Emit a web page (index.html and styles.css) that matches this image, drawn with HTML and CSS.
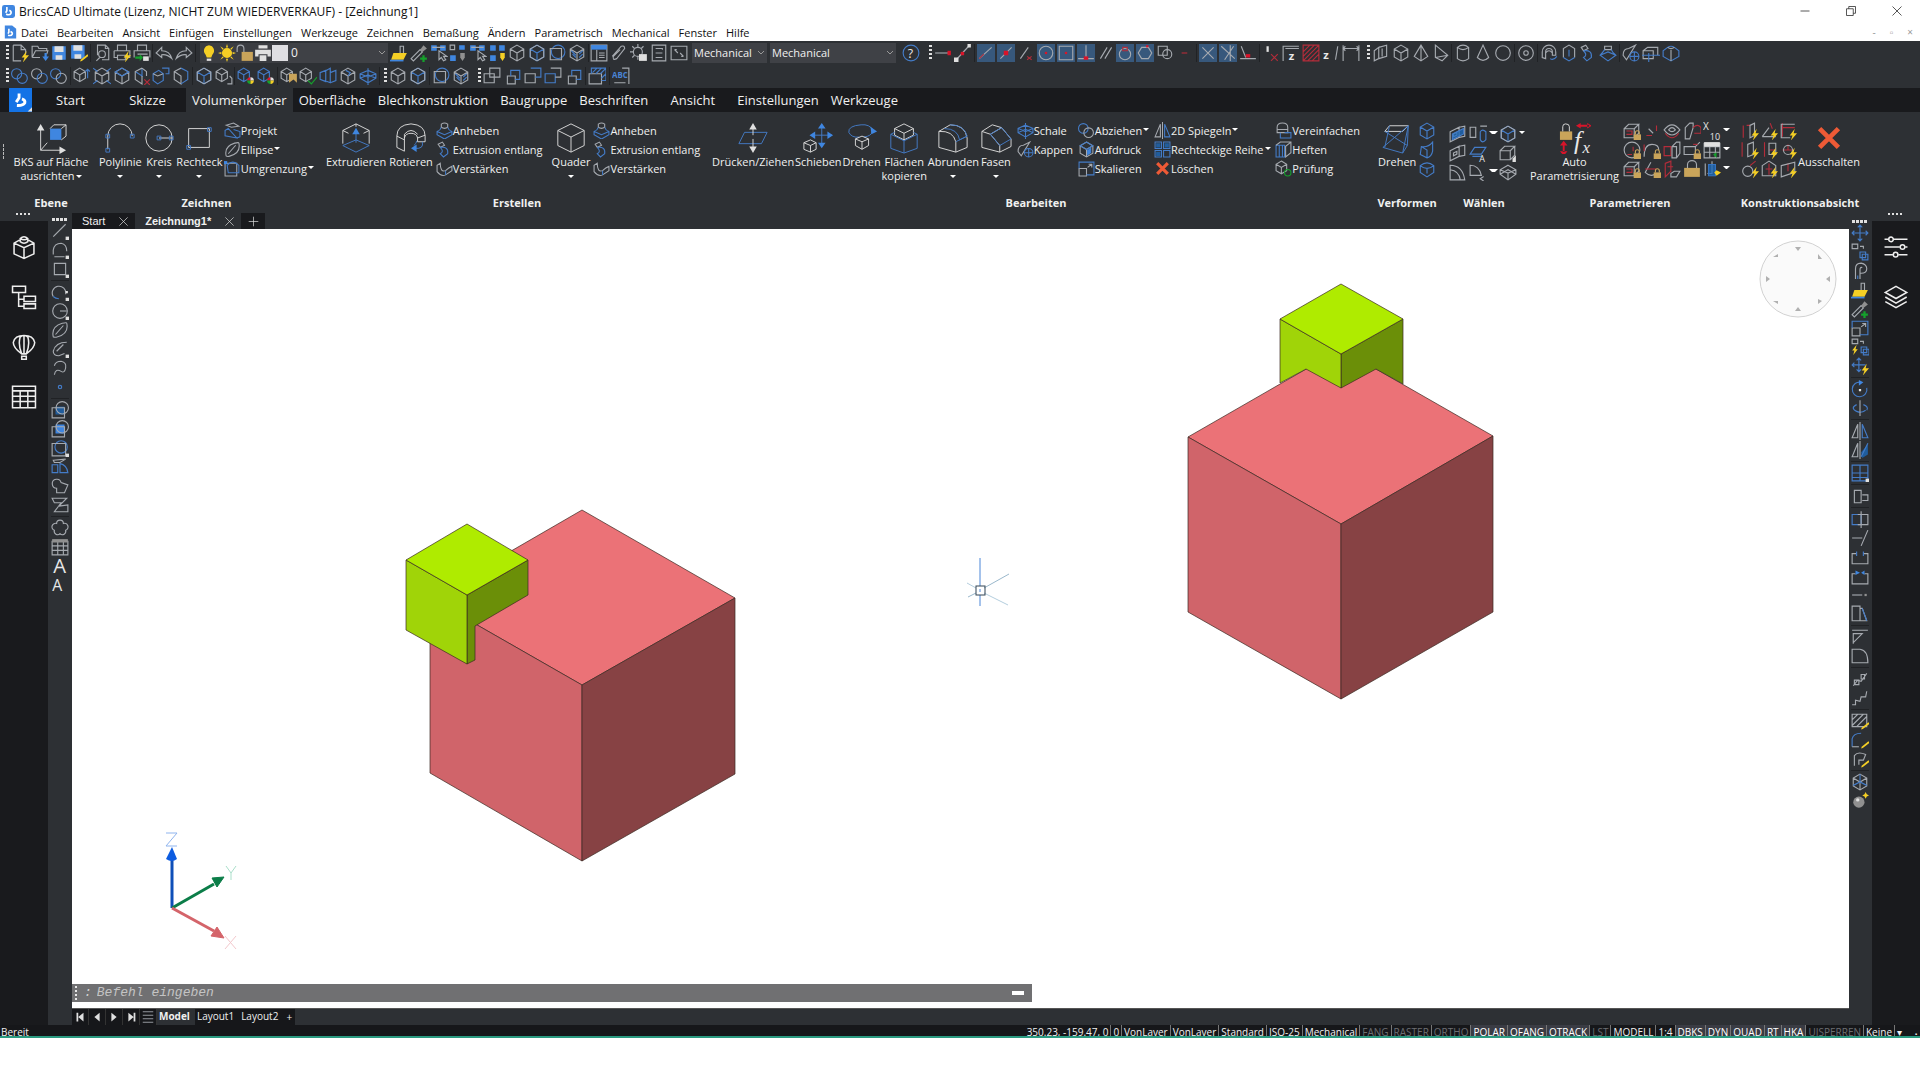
FILE: index.html
```html
<!DOCTYPE html>
<html lang="de">
<head>
    <meta charset="UTF-8">
    <meta name="viewport" content="width=device-width, initial-scale=1.0">
    <title>BricsCAD Ultimate - [Zeichnung1]</title>
    <link rel="stylesheet" href="styles.css">
</head>
<body>
    <header class="titlebar">
        <svg class="app-logo" data-icon="logo"></svg>
        <h1>BricsCAD Ultimate (Lizenz, NICHT ZUM WIEDERVERKAUF) - [Zeichnung1]</h1>
        <div class="window-buttons">
            <button aria-label="Minimieren"><svg data-icon="winMin"></svg></button>
            <button aria-label="Wiederherstellen"><svg data-icon="winRestore"></svg></button>
            <button aria-label="Schließen"><svg data-icon="winClose"></svg></button>
        </div>
    </header>

    <nav class="menubar">
        <svg class="doc-logo" data-icon="docLogo"></svg>
        <a href="#">Datei</a>
        <a href="#">Bearbeiten</a>
        <a href="#">Ansicht</a>
        <a href="#">Einfügen</a>
        <a href="#">Einstellungen</a>
        <a href="#">Werkzeuge</a>
        <a href="#">Zeichnen</a>
        <a href="#">Bemaßung</a>
        <a href="#">Ändern</a>
        <a href="#">Parametrisch</a>
        <a href="#">Mechanical</a>
        <a href="#">Fenster</a>
        <a href="#">Hilfe</a>
        <div class="mdi-buttons">
            <button aria-label="Dokument minimieren">-</button>
            <button aria-label="Dokument wiederherstellen">▫</button>
            <button aria-label="Dokument schließen">×</button>
        </div>
    </nav>

    <div class="toolbars">
        <div class="toolbar-row">
            <div class="toolbar t-standard" data-icons=":: new open save saveAs | preview print publish | undo redo |"></div>
            <div class="layer-box">
                <svg data-icon="bulb"></svg>
                <svg data-icon="sun"></svg>
                <svg data-icon="lockOpen"></svg>
                <svg data-icon="printer"></svg>
                <span class="swatch"></span>
                <select aria-label="Layer"><option>0</option></select>
            </div>
            <div class="toolbar t-layers" data-icons="brush picker selA selB selA selC"></div>
            <div class="toolbar t-views" data-icons="cubeW cubeB circSq cubeHatch | panel clip gear list arrows"></div>
            <select class="style-a" aria-label="Textstil"><option>Mechanical</option></select>
            <select class="style-b" aria-label="Bemaßungsstil"><option>Mechanical</option></select>
            <div class="toolbar t-help" data-icons="help"></div>
            <div class="toolbar t-snap" data-icons=":: track from | end! mid! near cen! geo! perp! par quad! node! ins ext | inter! appInt! perpR | noneR zed hatchR zedR dimR"></div>
            <div class="toolbar t-solids" data-icons=":: wall cubeP pyramid wedge | cyl cone sphere | torus | revolve extrudeS sweep loftB | slice section shell"></div>
        </div>
        <div class="toolbar-row">
            <div class="toolbar t-solid-edit" data-icons=":: uniB uniW uni | faceUp faceMove faceTop faceDel faceCopy faceRot | cubeB copyCube | colorCube colorCube | cubeTag cubeCheck cubesB cubeTop flatCube |"></div>
            <div class="toolbar t-vis" data-icons=":: cubeW cubeB | circSq cubeHatch"></div>
            <div class="toolbar t-order" data-icons=":: orderA orderD orderB orderC orderD | hatchTop | abc"></div>
        </div>
    </div>

    <nav class="ribbon-tabs">
        <button class="app-button" aria-label="Anwendungsmenü"><svg data-icon="mark"></svg></button>
        <a href="#">Start</a>
        <a href="#">Skizze</a>
        <a href="#" class="active">Volumenkörper</a>
        <a href="#">Oberfläche</a>
        <a href="#">Blechkonstruktion</a>
        <a href="#">Baugruppe</a>
        <a href="#">Beschriften</a>
        <a href="#">Ansicht</a>
        <a href="#">Einstellungen</a>
        <a href="#">Werkzeuge</a>
    </nav>

    <section class="ribbon">
        <div class="ribbon-grip"></div>
        <div class="group g-plane">
            <div class="tools">
                <button class="big"><svg data-big="ucs"></svg>BKS auf Fläche<span>ausrichten<i class="caret"></i></span></button>
            </div>
            <h2>Ebene</h2>
        </div>
        <div class="group g-draw">
            <div class="tools">
                <button class="big"><svg data-big="polyline"></svg>Polylinie<i class="caret"></i></button>
                <button class="big"><svg data-big="circle"></svg>Kreis<i class="caret"></i></button>
                <button class="big"><svg data-big="rect"></svg>Rechteck<i class="caret"></i></button>
                <div class="stack">
                    <button><svg data-icon="project"></svg>Projekt</button>
                    <button><svg data-icon="ellipse"></svg>Ellipse<i class="caret"></i></button>
                    <button><svg data-icon="boundary"></svg>Umgrenzung<i class="caret"></i></button>
                </div>
            </div>
            <h2>Zeichnen</h2>
        </div>
        <div class="group g-create">
            <div class="tools">
                <button class="big"><svg data-big="extrude"></svg>Extrudieren</button>
                <button class="big"><svg data-big="revolve"></svg>Rotieren</button>
                <div class="stack">
                    <button><svg data-icon="loft"></svg>Anheben</button>
                    <button><svg data-icon="sweep"></svg>Extrusion entlang</button>
                    <button><svg data-icon="thicken"></svg>Verstärken</button>
                </div>
                <button class="big"><svg data-big="box"></svg>Quader<i class="caret"></i></button>
                <div class="stack">
                    <button><svg data-icon="loft"></svg>Anheben</button>
                    <button><svg data-icon="sweep"></svg>Extrusion entlang</button>
                    <button><svg data-icon="thicken"></svg>Verstärken</button>
                </div>
            </div>
            <h2>Erstellen</h2>
        </div>
        <div class="group g-edit">
            <div class="tools">
                <button class="big"><svg data-big="pushpull"></svg>Drücken/Ziehen</button>
                <button class="big"><svg data-big="move"></svg>Schieben</button>
                <button class="big"><svg data-big="rotate"></svg>Drehen</button>
                <button class="big"><svg data-big="copyfaces"></svg>Flächen<span>kopieren</span></button>
                <button class="big"><svg data-big="fillet"></svg>Abrunden<i class="caret"></i></button>
                <button class="big"><svg data-big="chamfer"></svg>Fasen<i class="caret"></i></button>
                <div class="stack">
                    <button><svg data-icon="flatCube"></svg>Schale</button>
                    <button><svg data-icon="slice"></svg>Kappen</button>
                </div>
                <div class="stack">
                    <button><svg data-icon="uni"></svg>Abziehen<i class="caret"></i></button>
                    <button><svg data-icon="imprint"></svg>Aufdruck</button>
                    <button><svg data-icon="scale"></svg>Skalieren</button>
                </div>
                <div class="stack">
                    <button><svg data-icon="mirror"></svg>2D Spiegeln<i class="caret"></i></button>
                    <button><svg data-icon="array"></svg>Rechteckige Reihe<i class="caret"></i></button>
                    <button><svg data-icon="cross"></svg>Löschen</button>
                </div>
                <div class="stack">
                    <button><svg data-icon="simplify"></svg>Vereinfachen</button>
                    <button><svg data-icon="stitch"></svg>Heften</button>
                    <button><svg data-icon="audit"></svg>Prüfung</button>
                </div>
            </div>
            <h2>Bearbeiten</h2>
        </div>
        <div class="group g-deform">
            <div class="tools">
                <button class="big"><svg data-big="twist"></svg>Drehen</button>
                <div class="icon-grid one" data-icons="cubeBlue bend cubeRound"></div>
            </div>
            <h2>Verformen</h2>
        </div>
        <div class="group g-select">
            <div class="tools">
                <div class="icon-grid wide" data-icons="wallB selEdge v cubeB v wallW faceA . cubeArrow . arcA arcB v flatW ."></div>
            </div>
            <h2>Wählen</h2>
        </div>
        <div class="group g-param">
            <div class="tools">
                <button class="big"><svg data-big="autoparam"></svg>Auto<span>Parametrisierung</span></button>
                <div class="icon-grid six" data-icons="cubeLock pt torusR faceR xten v circLock arcLock boxR sqLock table v cubeLock coneLock wallR lock colsB v"></div>
            </div>
            <h2>Parametrieren</h2>
        </div>
        <div class="group g-intent">
            <div class="tools">
                <div class="icon-grid three" data-icons="boltA boltB boltC boltD boltE boltF boltG boltH boltI"></div>
                <button class="big"><svg data-big="cross"></svg>Ausschalten</button>
            </div>
            <h2>Konstruktionsabsicht</h2>
        </div>
    </section>

    <main class="workspace">
        <aside class="panel-strip">
            <i class="hgrip"></i>
            <div class="panel">
                <button aria-label="Komponenten"><svg data-big="pComp"></svg></button>
                <button aria-label="Struktur"><svg data-big="pTree"></svg></button>
                <button aria-label="Tipps"><svg data-big="pBalloon"></svg></button>
                <button aria-label="Tabelle"><svg data-big="pTable"></svg></button>
            </div>
        </aside>
        <div class="vtoolbar" data-icons=":: line pline square | arc circ ellipse ellArc spline point | hatchA hatchB hatchC wipe cloudA zigzag | cloud tableW bigA smallA"></div>

        <div class="document">
            <div class="doc-tabs">
                <a href="#">Start</a><button aria-label="Start schließen"><svg data-icon="x"></svg></button>
                <a href="#" class="active">Zeichnung1*</a><button class="active" aria-label="Zeichnung1 schließen"><svg data-icon="x"></svg></button>
                <button class="add" aria-label="Neue Zeichnung"><svg data-icon="plus"></svg></button>
            </div>
            <div class="canvas">
                <svg class="model" viewBox="72 229 1777 779" preserveAspectRatio="xMinYMin meet">
                    <!-- left pair -->
                    <g class="solid">
                        <polygon class="red-top" points="582,510 735,598 582,685 430,598"/>
                        <polygon class="red-left" points="430,598 582,685 582,861 430,773"/>
                        <polygon class="red-right" points="582,685 735,598 735,774 582,861"/>
                        <polygon class="green-right" points="467,595 528,560 528,595 475,626 475,660 467,664"/>
                        <polygon class="green-left" points="406,560 467,595 467,664 406,630"/>
                        <polygon class="green-top" points="467,524 528,560 467,595 406,560"/>
                    </g>
                    <!-- right pair -->
                    <g class="solid">
                        <polygon class="red-top" points="1341,349 1493,436 1341,524 1188,437"/>
                        <polygon class="red-left" points="1188,437 1341,524 1341,699 1188,612"/>
                        <polygon class="red-right" points="1341,524 1493,436 1493,612 1341,699"/>
                        <polygon class="green-right" points="1341,354 1403,319 1403,384 1376,369 1341,388"/>
                        <polygon class="green-left" points="1280,319 1341,354 1341,388 1306,369 1280,383"/>
                        <polygon class="green-top" points="1341,284 1403,319 1341,354 1280,319"/>
                    </g>
                    <!-- crosshair -->
                    <g class="cursor">
                        <path class="cz" d="M980 558V586M980 595V606"/>
                        <path class="cy" d="M984 588 1009 574M976 593 968 597"/>
                        <path class="cx" d="M984 593 1008 605M976 588 967 583"/>
                        <rect x="976" y="586" width="9" height="9"/>
                        <path class="cz" d="M980 589V592"/>
                    </g>
                    <!-- coordinate axes -->
                    <g class="axes">
                        <path d="M172 908V855" stroke="#0f4fb8" stroke-width="3"/>
                        <path d="M172 847 177 859Q172 863 166 859Z" fill="#0d5ce0"/>
                        <path d="M172 908 214 884" stroke="#0b7d48" stroke-width="3"/>
                        <path d="M224 877 217 887 212 878Z" fill="#0b7d48" stroke="#0b7d48"/>
                        <path d="M172 908 214 931" stroke="#d4646a" stroke-width="3"/>
                        <path d="M224 938 211 936 217 927Z" fill="#d4646a" stroke="#d4646a"/>
                        <path d="M166 833H177L166 846H177" stroke="#8fb4ee"/>
                        <path d="M226 866 231 873 236 866M231 873V880" stroke="#aadfca"/>
                        <path d="M225 936 236 949M236 936 225 949" stroke="#f3c8cc"/>
                    </g>
                    <!-- view compass -->
                    <g class="compass">
                        <circle cx="1798" cy="279" r="38"/>
                        <path d="M1795 247h6l-3 4ZM1795 311h6l-3-4ZM1766 276v6l4-3ZM1830 276v6l-4-3ZM1773 257h5v-3ZM1818 254v5h4ZM1773 301h5v3ZM1818 299v5l4-3Z"/>
                    </g>
                </svg>
                <div class="command">
                    <i class="dots"></i>
                    <label for="cmd">:</label>
                    <input id="cmd" type="text" placeholder="Befehl eingeben">
                    <button aria-label="Befehlszeile minimieren"></button>
                </div>
            </div>
            <div class="layouts">
                <button aria-label="Erstes Layout"><svg data-icon="first"></svg></button>
                <button aria-label="Vorheriges Layout"><svg data-icon="prev"></svg></button>
                <button aria-label="Nächstes Layout"><svg data-icon="next"></svg></button>
                <button aria-label="Letztes Layout"><svg data-icon="last"></svg></button>
                <button aria-label="Layoutliste"><svg data-icon="rows"></svg></button>
                <a href="#" class="active">Model</a>
                <a href="#">Layout1</a>
                <a href="#">Layout2</a>
                <button class="add">+</button>
            </div>
        </div>

        <div class="vtoolbar right" data-icons=":: moveB copyB offset brush picker scale copyBolt moveBolt | rotB rot3 | mirror mirror3 | arrayB | align | stretch trim breakA breakB join chamferB | filletA filletB | edA edB | hatchP pP sP | cubeEd ball"></div>
        <aside class="panel-strip">
            <i class="hgrip"></i>
            <div class="panel">
                <button aria-label="Eigenschaften"><svg data-big="pSliders"></svg></button>
                <button aria-label="Layer"><svg data-big="pLayers"></svg></button>
            </div>
        </aside>
    </main>

    <footer class="statusbar">
        <span class="ready">Bereit</span>
        <span class="coords">350.23, -159.47, 0</span>
        <span>0</span>
        <span>VonLayer</span>
        <span>VonLayer</span>
        <span>Standard</span>
        <span>ISO-25</span>
        <span>Mechanical</span>
        <button>FANG</button>
        <button>RASTER</button>
        <button>ORTHO</button>
        <button class="on">POLAR</button>
        <button class="on">OFANG</button>
        <button class="on">OTRACK</button>
        <button>LST</button>
        <span>MODELL</span>
        <span>1:4</span>
        <button class="on">DBKS</button>
        <button class="on">DYN</button>
        <button class="on">QUAD</button>
        <button class="on">RT</button>
        <button class="on">HKA</button>
        <button>UISPERREN</button>
        <span>Keine</span>
        <span class="more">▾</span>
        <span class="resize">⣠</span>
    </footer>

    <script src="icons.js"></script>
</body>
</html>
```

FILE: styles.css
```css
* {
    box-sizing: border-box;
}
body {
    margin: 0;
    min-height: 100vh;
    padding-bottom: 42px;
    display: flex;
    flex-direction: column;
    font-family: "Open Sans", "Noto Sans", sans-serif;
    font-size: 12px;
    background: #fff;
    color: #f0f0f0;
}
button, select, input {
    font: inherit;
    color: inherit;
    background: none;
    border: 0;
    padding: 0;
    margin: 0;
}
button {
    display: flex;
    align-items: center;
    justify-content: center;
}
a {
    color: inherit;
    text-decoration: none;
}
h1, h2 {
    margin: 0;
}

/* icons */
svg {
    display: block;
    flex: none;
    width: 18px;
    height: 18px;
    fill: none;
    stroke: #a6aab0;
    stroke-width: 1;
}
svg .b { stroke: #447cc8; }
svg .r { stroke: #b42c3a; }
svg .g { stroke: #15a02c; }
svg .o { stroke: #ee5a36; stroke-width: 3; }
svg .k { stroke: #222; }
svg .mk { stroke: #fff; stroke-width: 2; }
svg .fw { fill: #e0e0e0; stroke: none; }
svg .fb { fill: #3f86e0; stroke: none; }
svg .fd { fill: #1c6cc0; stroke: none; opacity: .75; }
svg .fy { fill: #f5cf25; stroke: none; }
svg .ft { fill: #c9a45a; stroke: none; }
svg .fr { fill: #d8142a; stroke: none; }
svg .fg { fill: #15a02c; stroke: none; }
svg .fs { fill: #909090; stroke: none; }
svg text {
    fill: #e8e8e8;
    stroke: none;
}

/* title and menu */
.titlebar {
    display: flex;
    align-items: center;
    height: 22px;
    padding-left: 2px;
    color: #111;
}
.titlebar h1 {
    margin-left: 4px;
    font-size: 12px;
    font-weight: 400;
}
.app-logo {
    width: 13px;
    height: 13px;
}
.window-buttons {
    display: flex;
    margin-left: auto;
}
.window-buttons button {
    width: 46px;
    height: 20px;
}
.window-buttons svg {
    width: 12px;
    height: 12px;
}
.menubar {
    display: flex;
    align-items: center;
    gap: 9px;
    height: 19px;
    padding: 1px 0 0 4px;
    font-size: 11px;
    color: #111;
}
.doc-logo {
    width: 13px;
    height: 16px;
    margin-right: -5px;
}
.mdi-buttons {
    display: flex;
    gap: 14px;
    margin-left: auto;
    margin-right: 7px;
    color: #999;
    font-size: 10px;
}

/* toolbars */
.toolbars {
    background: #2d3034;
    padding-bottom: 1px;
}
.toolbar-row {
    display: flex;
    align-items: center;
    height: 23px;
    padding-left: 6px;
}
.toolbar {
    display: flex;
    align-items: center;
    justify-content: space-between;
}
.toolbar button,
.vtoolbar button {
    width: 18px;
    height: 18px;
}
.toolbar button.on {
    background: #37587c;
}
.sep {
    width: 1px;
    height: 18px;
    background: #202225;
}
.grip {
    width: 3px;
    height: 16px;
    background: repeating-linear-gradient(#e0e0e0 0 2px, transparent 2px 4px);
}
.t-standard { width: 190px; margin-right: 4px; }
.t-layers { width: 117px; margin: 0 1px 0 2px; }
.t-views { width: 180px; margin-right: 4px; }
.t-help { width: 18px; margin: 0 9px 0 6px; }
.t-snap { width: 431px; margin-right: 7px; }
.t-solids { width: 313px; }
.t-solid-edit { width: 374px; margin-right: 4px; }
.t-vis { width: 86px; margin-right: 8px; }
.t-order { width: 152px; }
.layer-box {
    display: flex;
    align-items: center;
    width: 188px;
    height: 20px;
    background: #3b3d42;
}
.layer-box .swatch {
    width: 16px;
    height: 16px;
    background: #dedee2;
}
.layer-box select {
    flex: 1;
    padding-left: 3px;
}
select {
    height: 20px;
    padding-left: 2px;
    appearance: none;
    background: url("data:image/svg+xml,%3Csvg xmlns='http://www.w3.org/2000/svg' width='8' height='6'%3E%3Cpath d='M1 1 4 4 7 1' fill='none' stroke='%23999'/%3E%3C/svg%3E") no-repeat right 2px center #3f4146;
}
.style-a { width: 75px; margin-right: 3px; font-size: 11px; }
.style-b { width: 126px; font-size: 11px; }

/* ribbon */
.ribbon-tabs {
    display: flex;
    height: 24px;
    padding-left: 9px;
    background: #191a1d;
    font-size: 13px;
    line-height: 24px;
}
.ribbon-tabs a {
    min-width: 77px;
    padding: 0 6px;
    text-align: center;
}
.ribbon-tabs a.active {
    background: #2d3034;
}
.app-button {
    width: 23px;
    background: #1473e6;
}
.app-button svg {
    width: 23px;
    height: 24px;
}
.ribbon {
    display: flex;
    gap: 4px;
    height: 101px;
    padding: 9px 0 2px;
    background: #2d3034;
    font-size: 11px;
}
.ribbon-grip {
    width: 4px;
    height: 15px;
    margin-top: 23px;
    border-right: 1px dashed #bbb;
}
.group {
    display: flex;
    flex-direction: column;
    justify-content: space-between;
}
.group h2 {
    align-self: center;
    font-size: 11px;
    line-height: 16px;
    white-space: nowrap;
}
.tools {
    display: flex;
    justify-content: space-between;
    white-space: nowrap;
}
.big {
    flex-direction: column;
    justify-content: flex-start;
    line-height: 14px;
}
.big svg {
    width: 32px;
    height: 32px;
    margin: 1px 0;
    stroke: #dcdcdc;
}
.big > .caret {
    margin: 6px 0 0;
}
.caret {
    display: inline-block;
    flex: none;
    margin: 0 0 2px 1px;
    border: 3px solid transparent;
    border-top-color: #fff;
    border-bottom: 0;
}
.stack button {
    height: 19px;
}
.stack svg {
    width: 17px;
    height: 17px;
}
.g-plane { width: 86px; }
.g-plane .tools { justify-content: center; }
.g-draw { width: 216px; padding-left: 1px; }
.g-create { width: 390px; padding-left: 8px; }
.g-create .tools { justify-content: flex-start; gap: 3px; }
.g-create .stack { margin-right: 6px; }
.g-edit { width: 654px; padding-right: 6px; }
.g-edit .stack { margin-left: 4px; }
.g-deform { width: 74px; padding: 0 8px; }
.g-select { width: 72px; }
.g-param { width: 212px; padding: 0 6px; }
.g-intent { width: 120px; }
.icon-grid {
    display: grid;
    align-content: start;
    grid-auto-rows: 19px;
    align-items: center;
}
.icon-grid.one { grid-template-columns: 18px; }
.icon-grid.three { grid-template-columns: repeat(3, 19px); }
.icon-grid.six { grid-template-columns: repeat(5, 20px) 8px; }
.icon-grid.wide {
    grid-template-columns: 20px 20px 10px 20px 6px;
    padding-top: 3px;
}

/* workspace */
.workspace {
    display: flex;
    flex: 1;
    background: #2d3034;
}
.panel-strip {
    display: flex;
    flex-direction: column;
    align-items: center;
    width: 48px;
}
.hgrip {
    width: 16px;
    height: 2px;
    margin-bottom: 6px;
    background: repeating-linear-gradient(90deg, #e0e0e0 0 2px, transparent 2px 4px);
}
.panel {
    display: flex;
    flex-direction: column;
    align-items: center;
    flex: 1;
    align-self: stretch;
    gap: 24px;
    padding-top: 13px;
    background: #191a1d;
}
.panel svg {
    width: 26px;
    height: 26px;
    stroke: #eee;
    stroke-width: 2;
}
.vtoolbar {
    display: flex;
    flex-direction: column;
    align-items: center;
    gap: 1px;
    width: 24px;
    padding-top: 5px;
}
.vtoolbar .grip {
    width: 16px;
    height: 3px;
    background: repeating-linear-gradient(90deg, #e0e0e0 0 3px, transparent 3px 4px);
}
.vtoolbar .sep {
    width: 18px;
    height: 1px;
    margin: 1px 0;
}
.vtoolbar.right {
    width: 23px;
    padding: 7px 2px 0 0;
}
.document {
    display: flex;
    flex: 1;
    flex-direction: column;
    min-width: 0;
}
.doc-tabs {
    display: flex;
    height: 16px;
    font: 11px/16px "Liberation Sans", sans-serif;
}
.doc-tabs a,
.doc-tabs button {
    background: #191a1d;
}
.doc-tabs a {
    padding: 0 6px 0 10px;
}
.doc-tabs button {
    width: 24px;
}
.doc-tabs .active {
    background: #2d3034;
    font-weight: 700;
}
.doc-tabs svg {
    width: 11px;
    height: 11px;
    stroke: #ddd;
}
.canvas {
    position: relative;
    flex: 1;
    background: #fff;
}
.model {
    width: 100%;
    height: auto;
}
.model .solid {
    stroke: #3a2a22;
    stroke-opacity: .7;
    stroke-linejoin: round;
}
.red-top { fill: #eb7277; }
.red-left { fill: #d0646a; }
.red-right { fill: #874244; }
.green-top { fill: #afeb00; }
.green-left { fill: #a0d408; }
.green-right { fill: #6b8f08; }
.cursor .cz { stroke: #4b86d8; }
.cursor .cx { stroke: #b4cede; }
.cursor .cy { stroke: #9ab8cc; }
.cursor rect { stroke: #345; }
.axes { stroke: none; }
.compass circle { fill: #fafafa; stroke: #d2d2d2; stroke-width: 1; }
.compass path { fill: #b0b0b0; stroke: none; }

/* floats over the drawing */
.command {
    position: absolute;
    left: 0;
    bottom: 6px;
    display: flex;
    align-items: center;
    width: 54%;
    height: 18px;
    background: #707072;
    font: italic 13px/16px "Liberation Mono", monospace;
    color: #d0d0d0;
}
.command .dots {
    width: 2px;
    height: 15px;
    margin: 0 7px 0 3px;
    background: repeating-linear-gradient(#e8e8e8 0 2px, transparent 2px 4px);
}
.command input {
    flex: 1;
    margin-left: 5px;
}
.command input::placeholder {
    color: #c4c4c4;
}
.command button {
    width: 12px;
    height: 4px;
    margin-right: 8px;
    background: #fff;
}
.layouts {
    display: flex;
    height: 17px;
    border-top: 1px solid #555;
    font-size: 10px;
    line-height: 15px;
}
.layouts button,
.layouts a {
    background: #16171a;
}
.layouts button {
    width: 17px;
    border-right: 1px solid #333;
}
.layouts svg {
    width: 14px;
    height: 14px;
}
.layouts a {
    padding: 0 5px 0 2px;
}
.layouts .active {
    background: #2d3034;
    font-weight: 700;
}
.layouts .add {
    width: 12px;
    border: 0;
}

/* status */
.statusbar {
    display: flex;
    height: 13px;
    overflow: hidden;
    border-bottom: 2px solid #2a9a80;
    background: #16171a;
    font-size: 10px;
    line-height: 14px;
}
.statusbar span,
.statusbar button {
    height: 14px;
    padding: 0 2px;
    border-right: 1px solid #777;
    white-space: nowrap;
}
.statusbar button {
    color: #6c6e72;
}
.statusbar button.on {
    background: #3a3c44;
    color: #fff;
}
.statusbar .ready {
    margin-right: auto;
    padding-left: 1px;
    border: 0;
}
.statusbar .more {
    width: 14px;
    border: 0;
}
.statusbar .resize {
    border: 0;
}
```

FILE: icons.js
```js
// Every icon is a list of "class:path" parts separated by ";".
// Small icons use a 16px grid, big ones a 32px grid.
const circle = (x, y, r) => `M${x - r} ${y}a${r} ${r} 0 1 0 ${2 * r} 0a${r} ${r} 0 1 0 ${-2 * r} 0`;
const CUBE = "M8 1 14 4.5V11.5L8 15 2 11.5V4.5ZM2 4.5 8 8 14 4.5M8 8V15";
const HALF = "M6 1 11 4V10L6 13 1 10V4ZM1 4 6 7 11 4M6 7V13";
const BOX = "M1 6H10V14H1ZM1 6 5 2H14L10 6M14 2V10L10 14";
const WALL = "M1 6 9 2V11L1 15ZM9 2 14 1V10L9 11M4 8 7 6.500V9L4 10.500Z";
const LOCK = ";ft:M9.500 11H16V16H9.500Z;ft:M10.500 11V9.500a2.200 2.200 0 0 1 4.500 0V11H14V9.500a1.200 1.200 0 0 0-2.500 0V11Z";
const BOLT = ";fy:M14 6 9.500 12H12L10.500 16.500 16 10H13Z";
const PEN = ";fy:M15.500 9 16.500 10.500 10.500 15 9 15.500 9.500 14Z";
const RGB = ";fr:M9 12a3 3 0 0 1 3-3V12Z;fg:M9 12a3 3 0 0 0 3 3V12Z;fw:M12 9a3 3 0 0 1 3 3H12Z;fy:M12 15a3 3 0 0 0 3-3H12Z";
const SHEETS = "M6 1H15V9H6ZM1 6H10V14H1Z";

const ICONS = {
    logo: "fb:M3 0H13Q16 0 16 3V13Q16 16 13 16H3Q0 16 0 13V3Q0 0 3 0Z;mk:M6 2.500V7L4.500 9.500M9 6.500Q12 8 11 10.500 9.500 13 5 11.500",
    docLogo: "fb:M1 0H10L15 4V16H1Z;mk:M6 4V8L5 10M8 7.500Q11 9 10 11 9 13 5 12",
    mark: "mk:M7 3.500V6.500L5 9.500M9 7.200Q11.500 8 11 10 10 12 5.500 11.800;fw:M16 13V16H13Z",
    winMin: "k:M2 8H14", winRestore: "k:M2 5H11V14H2ZM5 5V2H14V11H11", winClose: "k:M2 2 14 14M14 2 2 14",
    x: "w:M2 2 14 14M14 2 2 14", plus: "w:M8 1V15M1 8H15",
    first: "fw:M4 3H6V13H4ZM12 3V13L6 8Z", prev: "fw:M11 3V13L5 8Z", next: "fw:M5 3V13L11 8Z", last: "fw:M11 3H13V13H11ZM5 3V13L11 8Z",
    rows: "w:M2 2H14M2 6H14M2 10H14M2 14H14",
    new: "w:M2 1H9L13 5V9M2 1V15H9M9 1V5H13" + BOLT,
    open: "w:M1 12V2H6L7 4H14V6M1 12 4 6H15L14 9M1 12H8;fb:M12 8V11H10L13 15 16 11H14V8Z",
    save: "fb:M2 2H14V14H2Z;fw:M4 2H12V7H4ZM5 10H11V14H5Z",
    saveAs: "fb:M1 1H13V13H1Z;fw:M3 1H11V6H3ZM4 9H10V13H4Z" + PEN,
    preview: "w:M4 10V1H11L14 4V14H8M11 1V4H14M3 15 6 12;w:" + circle(8, 9, 3),
    print: "w:M4 6V1H12V6M1 6H15V12H12M1 6V12H4M4 10H11V14H4Z" + BOLT,
    publish: "w:M4 6V1H12V6M1 12V6H15V12M4 9H13;fw:M9 11H14V15H9Z;fg:M2 11H6V9L9 12 6 15V13H2Z",
    undo: "w:M6 3 1 8 6 12V9.500Q11 9 15 13 13 6 6 6Z",
    redo: "w:M10 3 15 8 10 12V9.500Q5 9 1 13 3 6 10 6Z",
    bulb: "fy:M8 1a5 5 0 0 1 3 8.500L10 12H6L5 9.500A5 5 0 0 1 8 1Z;fw:M6 13H10V15H6Z",
    sun: "fy:" + circle(8, 8, 4.500) + ";fy:M8 0 9 3H7ZM8 16 9 13H7ZM0 8 3 7V9ZM16 8 13 7V9ZM2 2 5 4 4 5ZM14 2 11 4 12 5ZM2 14 4 11 5 12ZM14 14 12 11 11 12Z",
    lockOpen: "ft:M5 7H15V15H5Z;w:M7 7V4a3 3 0 0 0-6 0V7",
    lock: "ft:M1 7H15V15H1Z;w:M4 7V4a4 3.500 0 0 1 8 0V7",
    printer: "fw:M4 1H12V4H4ZM1 5H15V11H12V9H4V11H1ZM5 10H11V15H5Z",
    brush: "fy:M3 8H15L12 14H1Z;fb:M0 14H12V15.500H0Z;w:M9 8V2H12V8",
    picker: "w:M1 13 9 5 11 7 3 15Z;fs:M9 5 12 1 15 4 11 7Z;fg:M11 10H13V12H15V14H13V16H11V14H9V12H11Z",
    selA: "fb:M1 1H6V6H1ZM9 1H14V6H9Z;w:M2 3H13M8 6V14L10 12 12 15 14 14 12 11H15Z",
    selB: "w:M1 1H5V5H1Z;fb:M9 1H14V5H9ZM1 10H6V15H1Z;fs:M10 8H14V12L12 15 10 12Z",
    selC: "fb:M1 1H6V6H1ZM9 1H14V6H9ZM1 10H6V15H1Z;fy:M10 8H14V12L12 15 10 12Z",
    cubeW: "w:" + CUBE, cubeP: "w:" + CUBE, cubeB: "b:" + CUBE + ";w:M8 1 14 4.5V11.5L8 15M8 1 2 4.500V11.500L8 15", cubeBlue: "b:" + CUBE,
    cubeRound: "b:M2 5V11L8 15 14 11V5Q8 0 2 5ZM2 5Q8 10 14 5M8 8V12",
    circSq: "b:" + circle(9, 7, 6) + ";w:M2 4H12V14H2Z",
    cubeHatch: "w:" + CUBE + ";b:M4 9 7 12M3 6 7 10M10 9 13 6M10 12 13 9",
    panel: "w:M1 1H15V15H1ZM6 5V15M8 8H13M8 10H13M8 12H13;fb:M1 1H15V5H1Z",
    clip: "w:M2 11 10 2Q13 1 13 4L6 13Q2 15 3 11L9 5",
    gear: "w:" + circle(7, 7, 4) + ";w:M7 0V3M7 11V14M0 7H3M2 2 4 4M12 2 10 4M2 12 4 10;fw:M8 9H15V15H8Z",
    list: "w:M2 1H14V15H2ZM5 4H11V5M5 8H11M5 12H11",
    arrows: "w:M1 2H15V14H1ZM4 5 7 8M4 5H6M12 11 9 8M12 11H10",
    help: "<path class='b' d='" + circle(8, 8, 7) + "'/><text x='5' y='12' font-size='11'>?</text>",
    track: "w:M1 8H14;fr:M12 6H15V10H12Z", from: "w:M2 14 13 2;fr:M6 7H9V10H6Z;fw:M0 12H4V16H0ZM12 0H15V3H12Z",
    end: "w:M2 13 13 3;r:M2 13 6 9", mid: "w:M3 13 13 3;fr:M6 6H10V10H6Z", near: "w:M3 13 10 3;r:M9 11 13 14M13 11 9 14",
    cen: "w:" + circle(8, 8, 6) + ";fr:M7 7H9V9H7Z", geo: "w:M2 2H14V14H2Z;fr:M7 7H9V9H7Z", perp: "w:M8 1V13M1 13H15;fr:M6 11H10V14H6Z",
    par: "w:M3 13 9 3M7 13 13 3", quad: "w:" + circle(8, 9, 5) + ";r:M6 3H10V6H6Z", node: "w:M5 3H11L14 8 11 13H5L2 8Z;fr:M9 1H11V3H9Z",
    ins: "w:M2 2H10V10H2Z;w:" + circle(10, 9, 4), ext: "r:M5 8H10", inter: "w:M3 3 13 13M13 3 3 13", appInt: "w:M2 2 14 13M13 2 5 14M10 1V15",
    perpR: "w:M2 2 6 12M1 13H15;fr:M6 9H10V12H6Z", noneR: "r:M8 9 14 15M14 9 8 15;fw:M4 2H6V7H4Z",
    zed: "<path class='w' d='M1 15V2H15M3 4H15'/><text x='6' y='14' font-size='10' font-weight='700'>z</text>",
    zedR: "<path class='w' d='M14 2 12 14'/><text x='1' y='13' font-size='10' font-weight='700'>z</text>",
    hatchR: "r:M1 1H15V15H1ZM1 7 7 1M1 11 11 1M1 15 15 1M5 15 15 5M9 15 15 9", dimR: "w:M1 1V15M15 1V15M1 4H15M3 2 1 4 3 6M13 2 15 4 13 6",
    wall: "w:M2 6 6 3V13L2 15ZM6 3 13 1V11L6 13M9 4V11", pyramid: "w:M8 1 2 11 8 15 14 11ZM8 1V15", wedge: "w:M3 1V12L9 15 14 10ZM3 12 14 10",
    cyl: "w:M3 3V13Q8 17 13 13V3Q8-1 3 3Q8 7 13 3", cone: "w:M8 1 3 12Q8 17 13 12Z", sphere: "w:" + circle(8, 8, 6.500),
    torus: "w:" + circle(8, 8, 6.500) + ";w:" + circle(8, 8, 2), torusR: "w:M1 7Q8-2 15 7 8 16 1 7ZM5 7Q8 3 11 7 8 10 5 7Z;r:M2 10Q8 18 14 10",
    revolve: "w:M2 12V7a6 6 0 0 1 12 0V10H11V7a3 3 0 0 0-6 0V13ZM5 8Q8 4 11 8;b:M15 11Q12 15 9 13", extrudeS: "w:M3 12V4L8 1 13 4V12;b:M3 12 8 15 13 12M8 5V11",
    sweep: "w:M2 3 6 1 8 4 4 6Z;b:M4 6Q12 5 11 12L7 15 4 12Q8 10 4 6", loftB: "w:M5 2H11V5H5Z;b:M5 5Q3 8 1 10L8 15 15 10Q12 8 11 5M1 10 8 7 15 10",
    loft: "w:M5 2Q8 0 11 2V5Q8 7 5 5Z;b:M5 5Q4 8 1 9V12L8 16 15 12V9Q12 8 11 5M1 9 8 12 15 9",
    thicken: "w:M1 5V11Q5 16 9 14L15 10V6Q12 7 9 10 4 12 4 3Z;b:M9 10V14",
    slice: "w:M1 10Q1 4 6 4L12 1 4 14Z;b:" + circle(11, 11, 4) + ";b:M7 11H15M11 7V15",
    section: "w:M1 6 5 3H14V10M1 6H10V13H1Z;b:M0 10H16M6 8V16", shell: "b:M5 3Q8 1 11 3L15 6V11L8 15 1 11V6Z;w:M5 3Q8 5 11 3M8 5V15",
    uniB: "b:" + circle(5, 6, 4.500) + ";b:" + circle(10, 10, 4.500), uniW: "w:" + circle(5, 6, 4.500) + ";b:" + circle(10, 10, 4.500),
    uni: "b:" + circle(5, 6, 4.500) + ";w:" + circle(10, 10, 4.500),
    faceUp: "w:" + HALF + ";b:M13 10V2M11 4 13 2 15 4", faceMove: "w:" + CUBE + ";b:M0 1 4 4M16 1 12 4M0 15 4 12M16 15 12 12",
    faceTop: "w:" + CUBE + ";b:M2 4.500 8 1 14 4.500 8 8Z", faceDel: "b:M8 1V8L2 4;w:M8 1 2 4V11L8 15V8M8 1 12 4V8;r:M10 11 15 16M15 11 10 16",
    faceCopy: "b:M1 6 6 3 10 6V12L5 15 1 12ZM9 1H15V6H12;w:M1 6 5 8 10 6", faceRot: "w:M8 1 2 4V11L8 15V8L2 4;b:M8 1 14 4V11L8 15",
    copyCube: "w:" + HALF + ";w:M13 8 15 10V15H11", colorCube: "b:" + HALF + RGB, cubeTag: "w:" + HALF + ";ft:M8 6H15V14L12 11 8 14Z",
    cubeCheck: "w:" + HALF + ";g:M8 12 11 15 16 9", cubesB: "b:M1 5 6 3V13L1 11ZM5 4 10 1V14L5 12M10 5 15 3V12L10 14",
    cubeTop: "w:" + CUBE + ";b:M6 3 10 5 8 8", flatCube: "b:M8 3 15 6V10L8 14 1 10V6ZM1 6 8 9 15 6M8 1V16M1 10 8 7 15 10",
    flatW: "w:M8 2 15 6V10L8 15 1 10V6ZM1 6 8 9 15 6M8 9V15M1 10 8 6 15 10",
    orderA: "w:" + SHEETS, orderB: "w:M1 6H10V14H1Z;b:M6 1H15V9H10", orderC: "b:M1 6H10V14H1Z;w:M6 1H15V9H10", orderD: "w:M3 8H10V15H3Z;b:M6 8V3H14V11H10",
    hatchTop: "w:M1 6H12V15H1Z;b:M3 6V1H16V12H12M4 5 8 1M7 6 12 1M11 6 16 1M12 10 16 6",
    abc: "<path class='w' d='M9 1H15V15M2 14H12'/><text x='0' y='10' font-size='7' font-weight='700' style='fill:#4a84d4'>ABC</text>",
    project: "w:M2 3 9 1 14 4 7 5Z;b:M1 8 4 6 12 15 1 13ZM9 7 15 9V14L12 15",
    ellipse: "w:M2 14Q0 5 10 2 14 1 14 2 16 11 6 14 3 15 2 14ZM4 12 11 4", boundary: "w:M1 3H12V15H1Z;b:M3 5Q8-1 14 5V12H4Z;fb:M0 1H3V4H0Z",
    imprint: "w:" + CUBE + ";b:M2 4.500 8 1 14 4.500 8 8ZM9 9 12 7V11L9 13Z;fb:M9 9 12 7V11L9 13Z", scale: "w:M1 8H8V15H1Z;b:M1 8V2H15V14H8;w:M9 7 13 4M10 4H13V7",
    mirror: "w:M6 2V14H1Z;b:M10 2V14H15Z;w:M8 0V16", mirror3: "w:M6 2V14H1ZM8 0V16;fd:M9 10 15 3V12L10 15Z;b:M9 14 15 2",
    array: "b:M1 1H7V7H1ZM9 1H15V7H9ZM1 9H7V15H1ZM9 9H15V15H9Z;fd:M2 2H6V6H2ZM10 2H14V6H10ZM2 10H6V14H2Z", arrayB: "b:M1 1H15V15H1ZM8 1V15M1 8H15M1 12H15;fw:M13 13H16V16H13Z",
    cross: "o:M3 3 13 13M13 3 3 13", simplify: "w:M2 10V5Q2 1 7 1 12 1 12 5V10ZM2 7H12;b:M9 10H15V15H5V10", stitch: "b:M1 4H9V15H1ZM4 4V15M7 4V15;w:M1 4 5 1H15V11L10 15V5L15 1",
    audit: "w:" + HALF + ";g:" + circle(12, 12, 3), bend: "b:M3 5Q9 6 13 1V9Q12 14 8 15L2 12ZM3 5 8 8V15",
    wallB: "w:" + WALL + ";fd:M3 8 13 3V8L3 13Z;b:M3 8 13 3V8L3 13Z", wallW: "w:" + WALL, selEdge: "w:M1 2H6V11H1ZM10 1H16;b:M10 6Q12 3 15 6V13Q12 17 10 13Z",
    faceA: "<path class='b' d='M1 9 5 3H15L11 9ZM3 11H11'/><text x='9' y='16' font-size='8'>A</text>", cubeArrow: "w:" + BOX + ";fw:M12 13 15 10V16H12Z",
    arcA: "w:M1 15V2Q12 2 14 15ZM1 6Q9 7 10 15", arcB: "w:M1 11V2Q9 2 11 11ZM13 12 10 14 13 16",
    cubeLock: "w:" + BOX + ";r:M3 8H8V11H3" + LOCK, circLock: "w:" + circle(8, 8, 7) + ";r:M9 5V9M4 12H8" + LOCK, arcLock: "w:M1 14Q1 3 8 3 14 3 14 8;r:M1 3V9" + LOCK,
    coneLock: "w:M7 2 2 11Q6 15 10 13;r:M2 8H12" + LOCK, sqLock: "w:M1 5H11V12H1ZM11 5 15 1;r:M9 3H13" + LOCK, pt: "w:M5 6 9 10;r:M12 3V8M3 12H8",
    faceR: "w:M2 5 6 1H9V5L6 15H2Z;r:M9 5Q13 1 16 5V10H10", boxR: "r:M1 5H7V13H1Z;w:M8 5 12 1H15V11L12 15H8ZM8 5H12V15",
    wallR: "r:M2 3 7 1V10L2 15ZM9 6H4;w:M7 12 10 10H15L12 15H7Z", xten: "<text x='0' y='7' font-size='9'>X</text><text x='6' y='16' font-size='8'>10</text>",
    table: "w:M1 2H15V15H1ZM1 5H15M1 10H15M6 5V15M11 5V15;fw:M1 1H15V5H1Z;fg:M9 12 12 10V15Z", tableW: "w:M1 3H15V15H1ZM1 7H15M1 11H15M6 3V15M11 3V15;fs:M1 1H15V4H1Z",
    colsB: "w:M2 3V14M8 1V12H4;b:M5 4H11V14H5Z;fd:M5 4H11V14H5Z;fy:M12 9 16 11 12 14 10 11Z",
    boltA: "r:M2 3V14M5 3H8;w:M8 3 12 1V12L8 14Z" + BOLT, boltB: "r:M9 1 11 6;w:M2 13H14M2 13 8 5" + BOLT, boltC: "r:M3 1V13M3 5H14;w:M14 2H2V14H10" + BOLT,
    boltD: "r:M1 1V14;w:M6 3 11 1V12L6 14Z" + BOLT, boltE: "r:M4 1V14M8 8H14;w:M8 2H14V12H8Z" + BOLT, boltF: "r:M3 8H13M8 3V8;w:" + circle(8, 8, 4) + BOLT,
    boltG: "r:M8 5 13 1;w:" + circle(6, 10, 4.500) + BOLT, boltH: "r:M8 3V13M5 8H11;w:M2 5 8 1 14 5V14H2Z" + BOLT, boltI: "r:M8 3V10;w:M2 5 14 2V11L2 15Z" + BOLT,
    line: "w:M2 13 13 2;fw:M13 13H16V16H13Z", pline: "w:M3 14H12M2 12V8Q3 2 9 2 14 3 14 9;fw:M13 13H16V16H13Z", square: "w:M3 3H13V13H3Z;fw:M13 13H16V16H13Z",
    arc: "w:M2 12A6 6 0 1 1 13 10;b:M2 12Q4 14 7 14;fw:M13 7H15V9H13ZM13 13H16V16H13Z", circ: "w:" + circle(8, 8, 6.500) + ";w:M8 8H14;fw:M13 13H16V16H13Z",
    ellArc: "w:M14 2Q4 2 2 10 2 14 7 14L12 12M5 10 11 4;fw:M13 13H16V16H13Z", spline: "w:M3 6Q4 2 9 2 14 3 13 8 12 13 9 11 4 8 3 14", point: "b:" + circle(8, 8, 1.500),
    hatchA: "fd:M4 5H12V12H4Z;w:M1 6H12V15H1Z;w:" + circle(10, 6, 5.500), hatchB: "fb:M4 4H12V12H4Z;w:M1 6H12V15H1Z;w:" + circle(10, 6, 5.500),
    hatchC: "b:" + circle(9, 7, 5.500) + ";w:M1 4H13V15H1Z;fw:M13 13H16V16H13Z", wipe: "w:M2 2 13 1 8 4 3 4Z;b:M1 6H6V13H1ZM8 5Q14 6 15 13H8Z",
    cloudA: "w:M5 10A4 4 0 1 1 9 5L15 7 12 14H5Z", zigzag: "w:M1 2H14L7 9 15 8V14H3L9 6H3Z", cloud: "w:M5 4A3 3 0 0 1 11 4 3 3 0 0 1 13 10 3 3 0 0 1 8 13 3 3 0 0 1 3 10 3 3 0 0 1 5 4Z",
    bigA: "<text x='2' y='14' font-size='18'>A</text>", smallA: "<text x='1' y='13' font-size='14'>A</text>",
    moveB: "b:M8 1V15M1 8H15M6 3 8 1 10 3M6 13 8 15 10 13M3 6 1 8 3 10M13 6 15 8 13 10", moveBolt: "b:M7 1V13M1 7H13M5 3 7 1 9 3M5 11 7 13 9 11M3 5 1 7 3 9" + BOLT,
    copyB: "w:M1 1H6V5H1ZM8 3H11V5;b:M8 8H13V13H8ZM10 10H15V15H10Z", copyBolt: "w:M1 1H6V5H1ZM8 3H11V5;b:M9 8H14V13H9ZM11 10H16V15H11Z;fy:M5 6 1 11H3L2 15 6 10H4Z",
    offset: "w:M4 15V6Q4 1 9 1 14 2 14 6 14 10 9 10H8M8 15V7Q8 4 10 5;b:M6 15V12", rotB: "b:M9 2A6.500 6.500 0 1 0 14 7;fb:M7 0 11 2 7 5Z;fw:M7 8H9V10H7Z", rot3: "b:M5 5Q-1 8 5 11 9 13 13 10M11 5Q16 7 14 10;w:M8 1V15",
    align: "w:M3 3H9V14H3ZM10 7H15V12H10", stretch: "b:M1 4H9V13H1Z;w:M6 4H15V13H6M9 1V16", trim: "w:M1 8H10M15 1 9 15",
    breakA: "w:M5 5H1V14H15V5H11;b:M5 3V7M11 3V7", breakB: "w:M4 6H1V15H15V6H12;fb:M4 3 8 5 4 7ZM12 3 9 5 12 7Z", join: "w:M1 8H10;fs:M12 7H14V9H12Z",
    chamferB: "w:M1 1H8V14H1ZM8 3H10L14 14H8;b:M10 3 14 14", filletA: "w:M1 2H15M2 14V5H10L2 13", filletB: "w:M1 2H8Q15 3 15 14H1Z",
    edA: "w:M2 14 6 9 9 10 14 3M3 9H7V13H3ZM9 4H12V8H9Z", edB: "w:M1 14H4V10L8 11 9 7H13L14 2", hatchP: "w:M1 2H14V13H1ZM1 7 6 2M1 12 11 2M5 13 14 4" + PEN,
    pP: "b:M1 14V7Q2 2 9 2;w:M1 14H7" + PEN, sP: "w:M3 14V5Q6 1 13 4L11 9 7 9V13" + PEN, cubeEd: "w:" + CUBE + ";b:M8 1V8M2 11 8 8 14 11",
    ball: "fs:" + circle(7, 9, 5) + ";fw:" + circle(6, 7, 1.500) + ";fy:M13 0 14 2 16 3 14 4 13 6 12 4 10 3 12 2Z"
};

const node = (x, y) => `;b:M${x - 2} ${y - 2}h4v4h-4Z`;
const BIGBOX = "M16 1 30 8V24L16 31 2 24V8ZM2 8 16 15 30 8M16 15V31";
const BIG = {
    ucs: "w:M5 29V6M5 29H28M5 29 12 21;fw:M5 1 9 8H1ZM32 29 25 25V33Z;fb:M15 6H27V18H15Z;w:M15 6 19 2H32V14L27 18M27 6 32 2",
    polyline: "w:M3 28V14A12 12 0 0 1 29 14" + node(3, 14) + node(3, 29) + node(29, 14),
    circle: "w:" + circle(16, 16, 14) + ";w:M16 16H30" + node(16, 16) + node(29, 16),
    rect: "w:M5 6H27V26H5Z" + node(27, 7) + node(5, 26),
    extrude: "w:M2 22V8L16 1 30 8V22M2 8 8 11M30 8 24 11M16 1V4;b:M2 24 16 31 30 24 16 18Z;b:M16 21V8;fb:M16 5 20 12H12Z",
    revolve: "w:M1 26V14Q1 2 16 1 31 2 31 14V20H23V16Q22 11 16 11 10 11 9 16V30L1 26M1 14 9 18M9 12Q16 4 23 12M9 12V16M23 16 31 13;b:M28 20Q30 28 20 27M22 19Q22 22 19 24;fb:M16 27 22 23V31Z",
    box: "w:" + BIGBOX,
    pushpull: "b:M1 22 7 10H31L25 22Z;w:M16 5V13M16 17V27;fw:M16 0 20 7H12ZM16 32 20 25H12Z",
    move: "b:M20 4V23M10 13H31;fb:M20 0 24 6H16ZM20 27 24 21H16ZM7 13 13 9V17ZM32 13 26 9V17Z;w:M8 18 14 21V28L8 31 1 28V21ZM1 21 8 24 14 21M8 24V31",
    rotate: "b:M28 8Q24 1 15 2 1 3 2 10 5 16 13 15M18 15Q26 14 27 9;fb:M25 4 32 9 26 12Z;w:M16 14 23 17V24L16 28 9 24V17ZM9 17 16 20 23 17M16 20V28",
    copyfaces: "w:M16 1 26 6V13L16 18 6 13V6ZM6 6 16 11 26 6M16 11V18;b:M6 10 2 12V27L16 32 30 27V12L26 10M2 12 16 19 30 12M16 19V32",
    fillet: "w:M1 26V9L13 2Q29 2 31 16V26L19 31 1 26M1 9Q16 8 19 20V31;b:M7 6Q21 6 23 18L31 14M19 20 31 14M13 2Q28 2 31 14",
    chamfer: "w:M1 26V9L12 2 22 5 32 17V25L20 31 1 26M1 9 10 12 20 24V31M10 12 22 5;b:M10 12 22 5 32 17 20 24Z",
    twist: "w:M8 3H28L22 9H3Z;b:M3 9 27 24M28 3 22 32 1 26ZM8 3 3 26M28 3 27 24 22 32",
    autoparam: "<path class='ft' d='M0 9H13V18H0Z'/><path class='w' d='M3 9V4Q3 1 6 1 10 1 10 4V9'/><path class='fr' d='M4 19 8 24H0ZM4 35 8 30H0ZM3 23H5V31H3ZM17 3 22 0V6ZM34 3 29 0V6ZM20 2H31V4H20Z'/><text x='15' y='28' font-size='27' font-style='italic' font-family='Liberation Serif'>f</text><text x='24' y='32' font-size='18' font-style='italic' font-family='Liberation Serif'>x</text>",
    cross: "<path d='M6 6 26 26M26 6 6 26' stroke='#ee5a36' stroke-width='5'/>",
    pComp: "w:M10 7 3 11V25L16 31 29 25V11L22 7M3 11 16 17 29 11M16 17V31M11 5Q16 0 21 5V9Q16 13 11 9ZM11 5Q16 8 21 5",
    pTree: "w:M1 2H18V10H1ZM9 10V28H16M9 19H16M16 15H31V22H16ZM16 25H31V31H16Z",
    pBalloon: "w:M13 25Q2 17 2 10 4 1 16 1 28 1 30 10 30 17 19 25ZM13 25Q8 13 11 3 16-1 21 3 24 13 19 25M16 1V25M13 28H19V32H13Z",
    pTable: "w:M1 2H31V30H1ZM1 8H31M1 15H31M1 22H31M11 8V30M21 8V30",
    pSliders: "w:M1 6H6M13 6H31M1 16H21M28 16H31M1 26H12M19 26H31;w:" + circle(9.500, 6, 3) + ";w:" + circle(24.500, 16, 3) + ";w:" + circle(15.500, 26, 3),
    pLayers: "w:M16 2 30 10 16 18 2 10ZM2 16 16 24 30 16M2 22 16 30 30 22"
};

function markup(def) {
    if (def.startsWith("<")) return def;
    return def.split(";").map(part => {
        const i = part.indexOf(":");
        return `<path class="${part.slice(0, i)}" d="${part.slice(i + 1)}"/>`;
    }).join("");
}

function button(name) {
    if (name === "|") return '<i class="sep"></i>';
    if (name === "::") return '<i class="grip"></i>';
    if (name === ".") return "<i></i>";
    if (name === "v") return '<i class="caret"></i>';
    const on = name.endsWith("!");
    const key = on ? name.slice(0, -1) : name;
    return `<button aria-label="${key}"${on ? ' class="on"' : ""}><svg viewBox="0 0 16 16">${markup(ICONS[key])}</svg></button>`;
}

document.querySelectorAll("[data-icons]").forEach(bar => {
    bar.innerHTML = bar.dataset.icons.split(" ").map(button).join("");
});
document.querySelectorAll("[data-icon]").forEach(svg => {
    svg.setAttribute("viewBox", "0 0 16 16");
    svg.innerHTML = markup(ICONS[svg.dataset.icon]);
});
document.querySelectorAll("[data-big]").forEach(svg => {
    svg.setAttribute("viewBox", "-1 -1 34 34");
    svg.innerHTML = markup(BIG[svg.dataset.big]);
});
```
